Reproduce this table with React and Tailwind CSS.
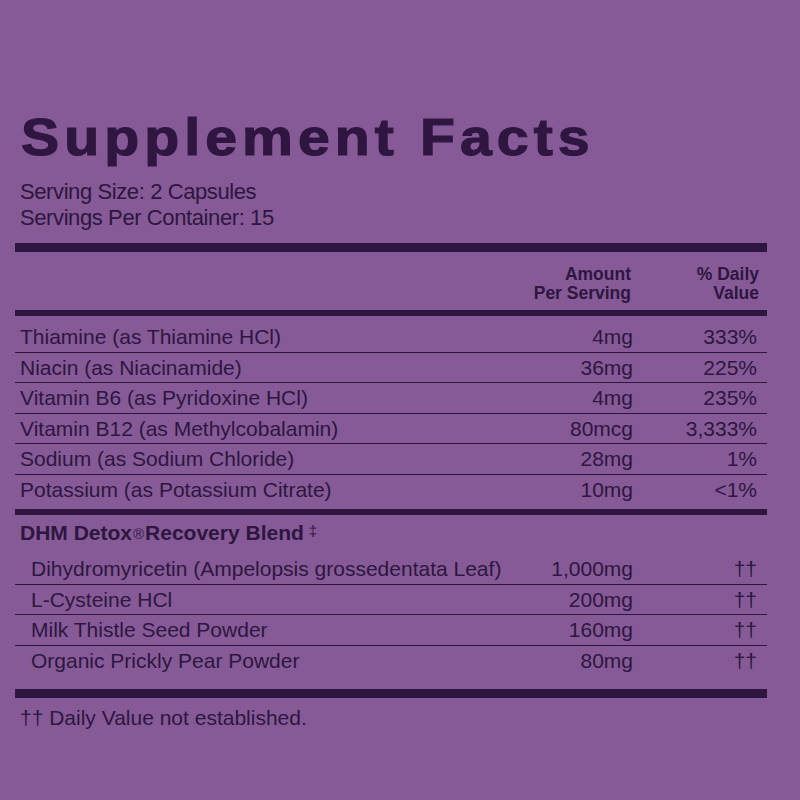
import React from "react";

const rows = [
  ["Thiamine (as Thiamine HCl)", "4mg", "333%"],
  ["Niacin (as Niacinamide)", "36mg", "225%"],
  ["Vitamin B6 (as Pyridoxine HCl)", "4mg", "235%"],
  ["Vitamin B12 (as Methylcobalamin)", "80mcg", "3,333%"],
  ["Sodium (as Sodium Chloride)", "28mg", "1%"],
  ["Potassium (as Potassium Citrate)", "10mg", "<1%"],
];

const blend = [
  ["Dihydromyricetin (Ampelopsis grossedentata Leaf)", "1,000mg", "††"],
  ["L-Cysteine HCl", "200mg", "††"],
  ["Milk Thistle Seed Powder", "160mg", "††"],
  ["Organic Prickly Pear Powder", "80mg", "††"],
];

function Row({ name, amt, pct, last, indent }) {
  return (
    <div
      className={
        "flex h-[30.5px] leading-[29.5px] pr-[10px] " +
        (indent ? "pl-[16px] " : "pl-[5px] ") +
        (last ? "" : "border-b border-[#2e1640]")
      }
    >
      <div className="flex-1 whitespace-nowrap">{name}</div>
      <div className="text-right whitespace-nowrap">{amt}</div>
      <div className="w-[124px] text-right whitespace-nowrap">{pct}</div>
    </div>
  );
}

export default function App() {
  return (
    <div
      className="w-[800px] h-[800px] bg-[#855a97] text-[#2e1640] overflow-hidden"
      style={{ fontFamily: '"Liberation Sans", Arial, sans-serif' }}
    >
      <div className="pt-[112px] pl-[15px] w-[767px]">
        <div className="pl-[6px]">
          <div className="origin-left scale-x-110 text-[52px] leading-[51px] font-bold tracking-[4.6px] whitespace-nowrap [-webkit-text-stroke:1.2px_#2e1640]">
            Supplement Facts
          </div>
        </div>
        <div className="mt-[16px] pl-[5px] text-[22px] leading-[26px] tracking-[-0.4px]">
          <div>Serving Size: 2 Capsules</div>
          <div>Servings Per Container: 15</div>
        </div>
        <div className="mt-[12px] h-[9px] bg-[#2e1640]" />
        <div className="mt-[13px] flex justify-end pr-[8px] text-[17.5px] leading-[19px] font-bold">
          <div className="text-right">
            <div>Amount</div>
            <div>Per Serving</div>
          </div>
          <div className="w-[128px] text-right">
            <div>% Daily</div>
            <div>Value</div>
          </div>
        </div>
        <div className="mt-[7px] h-[6px] bg-[#2e1640]" />
        <div className="mt-[6px] text-[21px]">
          {rows.map((r, i) => (
            <Row key={i} name={r[0]} amt={r[1]} pct={r[2]} last={i === rows.length - 1} />
          ))}
        </div>
        <div className="mt-[4px] h-[6px] bg-[#2e1640]" />
        <div className="mt-[3px] h-[36px] pl-[5px] text-[21px] leading-[29.5px] font-bold whitespace-nowrap">
          DHM Detox
          <sup className="text-[15px] font-normal relative top-[-1px] ml-[1px] mr-[1px]">®</sup>
          Recovery Blend
          <sup className="text-[15px] font-normal relative top-[-4px] ml-[5px]">‡</sup>
        </div>
        <div className="text-[21px]">
          {blend.map((r, i) => (
            <Row key={i} name={r[0]} amt={r[1]} pct={r[2]} last={i === blend.length - 1} indent />
          ))}
        </div>
        <div className="mt-[13px] h-[9px] bg-[#2e1640]" />
        <div className="mt-[5px] pl-[5px] text-[21px] leading-[29.5px]">†† Daily Value not established.</div>
      </div>
    </div>
  );
}
